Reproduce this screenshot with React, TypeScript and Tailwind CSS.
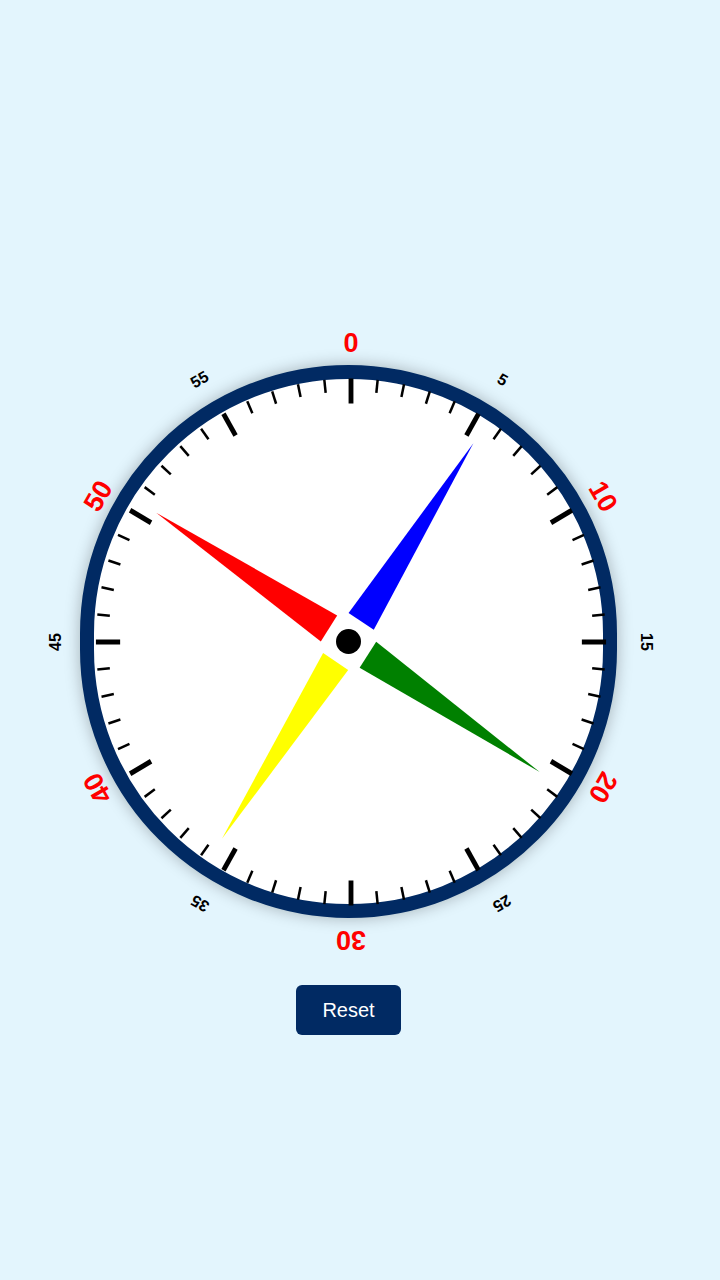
const ticks = Array.from({ length: 60 }, (_, i) => i);

// label radius measured per position (dial is slightly oval)
const labels = [
  { n: 0, r: 299 },
  { n: 5, r: 303 },
  { n: 10, r: 291 },
  { n: 15, r: 295.5 },
  { n: 20, r: 291 },
  { n: 25, r: 302 },
  { n: 30, r: 298 },
  { n: 35, r: 302 },
  { n: 40, r: 292.5 },
  { n: 45, r: 295.5 },
  { n: 50, r: 292 },
  { n: 55, r: 303 },
];

const hands = [
  { angle: 33, color: "#0000ff" },
  { angle: 123.5, color: "#008000" },
  { angle: 213.5, color: "#ffff00" },
  { angle: 303, color: "#ff0000" },
];

const Dial = () => {
  return (
    <div className="relative h-[553px] w-[537px] rounded-full border-[14px] border-[#012a63] bg-white shadow-[0_0_16px_rgba(0,0,0,0.28)]">
      <svg
        className="absolute inset-0 overflow-visible"
        width={509}
        height={525}
        viewBox="0 0 509 525"
      >
        {/* ticks + labels */}
        <g transform="translate(257 263)">
          <g transform="scale(0.968 1)">
            {ticks.map((i) => {
              const major = i % 5 === 0;
              return (
                <rect
                  key={i}
                  x={major ? -2.5 : -1.3}
                  y={-263.5}
                  width={major ? 5 : 2.6}
                  height={major ? 25 : 13}
                  fill="#000"
                  transform={`rotate(${i * 6})`}
                />
              );
            })}
          </g>
          {labels.map(({ n, r }) => {
            const big = n % 10 === 0;
            return (
              <text
                key={n}
                transform={`rotate(${n * 6}) translate(0 ${-r})`}
                textAnchor="middle"
                dominantBaseline="central"
                fill={big ? "#ff0000" : "#000"}
                fontSize={big ? 27 : 16}
                fontWeight={big ? 700 : 600}
                fontFamily='"Liberation Sans", Arial, sans-serif'
              >
                {n}
              </text>
            );
          })}
        </g>

        {/* hands */}
        <g transform="translate(254.5 262.5)">
          <g transform="scale(0.9695 1)">
            {hands.map((h) => (
              <polygon
                key={h.angle}
                points="-15.5,-24 15.5,-24 0,-236.5"
                fill={h.color}
                transform={`rotate(${h.angle})`}
              />
            ))}
          </g>
          <circle r={12.5} fill="#000" />
        </g>
      </svg>
    </div>
  );
};

const App = () => {
  return (
    <div className="flex min-h-screen flex-col items-center bg-[#e3f5fd] pr-[23px] pt-[365px] font-['Liberation_Sans',Arial,sans-serif]">
      <Dial />
      <button className="mt-[67px] h-[50px] rounded-md bg-[#012a63] px-[26px] text-[20px] text-white">
        Reset
      </button>
    </div>
  );
};

export default App;
